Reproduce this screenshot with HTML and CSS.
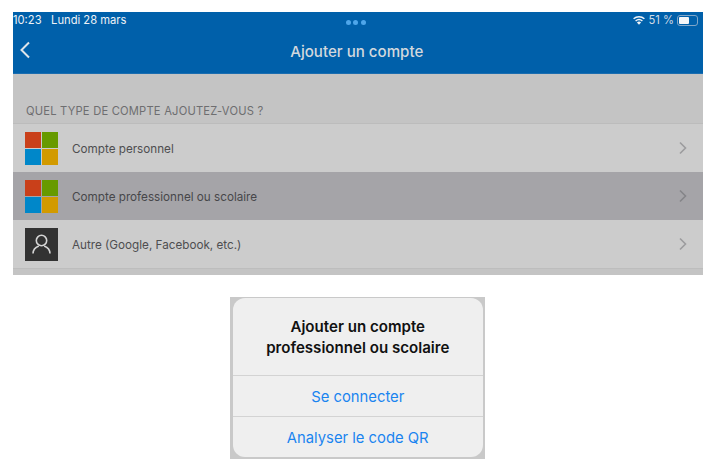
FILE: index.html
```html
<!DOCTYPE html>
<html lang="fr">
<head>
<meta charset="utf-8">
<title>Ajouter un compte</title>
<link rel="stylesheet" href="styles.css">
</head>
<body>
<main class="page">
  <section class="screen">
    <header class="appbar">
      <div class="status">
        <span class="status-left"><span>10:23</span><span>Lundi 28 mars</span></span>
        <span class="dots"><i></i><i></i><i></i></span>
        <span class="status-right">
          <svg class="wifi" width="14" height="10" viewBox="0 0 14 10"><path d="M7 9.8 4.9 7.4a3.2 3.2 0 0 1 4.2 0z" fill="#f2f5f8"/><path d="M3.6 6A5.2 5.2 0 0 1 10.4 6M1.6 3.8A8.2 8.2 0 0 1 12.4 3.8" fill="none" stroke="#f2f5f8" stroke-width="1.5"/></svg>
          <span>51 %</span>
          <span class="battery"><span class="battery-fill"></span></span>
        </span>
      </div>
      <div class="navbar">
        <svg class="back" width="12" height="18" viewBox="0 0 12 18"><path d="M10 1.5 2.5 9l7.5 7.5" fill="none" stroke="#dfe5ea" stroke-width="2"/></svg>
        <h1>Ajouter un compte</h1>
      </div>
    </header>
    <div class="section-title">QUEL TYPE DE COMPTE AJOUTEZ-VOUS ?</div>
    <ul class="rows">
      <li class="row">
        <span class="ms"><i class="red"></i><i class="green"></i><i class="blue"></i><i class="yellow"></i></span>
        <span class="label">Compte personnel</span>
        <svg class="chev" width="8" height="14" viewBox="0 0 8 14"><path d="M1 1.5 6.5 7 1 12.5" fill="none" stroke="#9c9c9e" stroke-width="1.6"/></svg>
      </li>
      <li class="row selected">
        <span class="ms"><i class="red"></i><i class="green"></i><i class="blue"></i><i class="yellow"></i></span>
        <span class="label">Compte professionnel ou scolaire</span>
        <svg class="chev" width="8" height="14" viewBox="0 0 8 14"><path d="M1 1.5 6.5 7 1 12.5" fill="none" stroke="#858589" stroke-width="1.6"/></svg>
      </li>
      <li class="row">
        <span class="person">
          <svg width="33" height="33" viewBox="0 0 33 33"><circle cx="16.5" cy="12.5" r="5.2" fill="none" stroke="#d4d4d4" stroke-width="1.6"/><path d="M8 25.5c0-4 3-6.5 5.8-7.6M25 25.5c0-4-3-6.5-5.8-7.6" fill="none" stroke="#d4d4d4" stroke-width="1.6"/></svg>
        </span>
        <span class="label">Autre (Google, Facebook, etc.)</span>
        <svg class="chev" width="8" height="14" viewBox="0 0 8 14"><path d="M1 1.5 6.5 7 1 12.5" fill="none" stroke="#9c9c9e" stroke-width="1.6"/></svg>
      </li>
    </ul>
  </section>
  <section class="dialog-wrap">
    <div class="dialog">
      <h2>Ajouter un compte<br>professionnel ou scolaire</h2>
      <button class="action" type="button">Se connecter</button>
      <button class="action" type="button">Analyser le code QR</button>
    </div>
  </section>
</main>
</body>
</html>
```
FILE: styles.css
```css
* { box-sizing: border-box; }
html, body { margin: 0; padding: 0; background: #fff; }
body { font-family: Inter, "Liberation Sans", sans-serif; }
.page { padding-top: 12px; width: 715px; }

.screen { width: 690.5px; height: 263px; margin-left: 12.5px; background: #c4c4c4; }
.appbar { height: 62px; background: #0060aa; border-bottom: 1px solid #1a6db0; }
.status { height: 15px; padding: 1px 5px 0 0.5px; display: grid; grid-template-columns: 1fr auto 1fr; align-items: center; color: #eef2f6; font-size: 11.2px; line-height: 14px; }
.status-left { display: flex; gap: 9.5px; }
.dots { display: flex; gap: 2.5px; padding-top: 4px; }
.dots i { width: 5px; height: 5px; border-radius: 50%; background: #4ea6ea; }
.status-right { display: flex; align-items: center; justify-content: flex-end; gap: 3px; color: #d0dbe6; }
.battery { width: 21px; height: 11px; border: 1px solid #7fa6c9; border-radius: 3px; padding: 1px; display: flex; }
.battery-fill { width: 10px; background: #f4f6f8; border-radius: 1px; }
.navbar { position: relative; height: 46px; padding: 2px 2px 0 0; display: flex; align-items: center; justify-content: center; }
.back { position: absolute; left: 6.5px; top: 14px; }
.navbar h1 { margin: 0; font-size: 15.1px; font-weight: 500; color: #d3d8dd; }

.section-title { height: 50px; padding: 30px 0 0 13.5px; font-size: 11.2px; line-height: 14px; letter-spacing: 0.2px; color: #6e6e70; border-bottom: 1px solid #bcbcbc; }
.rows { margin: 0; padding: 0; list-style: none; border-bottom: 1px solid #bdbdbd; }
.row { height: 48px; display: flex; align-items: center; padding: 0 16px 0 12.5px; background: #cccccc; color: #4e4e50; font-size: 11.7px; }
.row.selected { background: #a5a4a8; color: #47474a; }
.ms { width: 33px; height: 33px; display: grid; grid-template-columns: 1fr 1fr; grid-template-rows: 1fr 1fr; gap: 1px; }
.ms i { display: block; }
.red { background: #c9401a; }
.green { background: #679a00; }
.blue { background: #0087c9; }
.yellow { background: #d29a00; }
.person { width: 33px; height: 33px; background: #323232; display: block; }
.person svg { display: block; }
.label { margin-left: 14px; padding-top: 2px; flex: 1; }

.dialog-wrap { width: 255px; height: 162px; margin: 22px 0 0 230px; background: #c9c9c9; padding: 1px 2px 2px 2.5px; }
.dialog { height: 159px; background: #efefef; border-radius: 12px; display: flex; flex-direction: column; }
.dialog h2 { margin: 0; height: 77px; padding-top: 2px; display: flex; align-items: center; justify-content: center; text-align: center; font-size: 15.1px; font-weight: 600; line-height: 20.5px; color: #111; }
.action { flex: 1; border: 0; border-top: 1px solid #d3d3d3; background: none; padding: 2px 0 0; font: inherit; font-size: 14.8px; color: #1a84f0; }
```
